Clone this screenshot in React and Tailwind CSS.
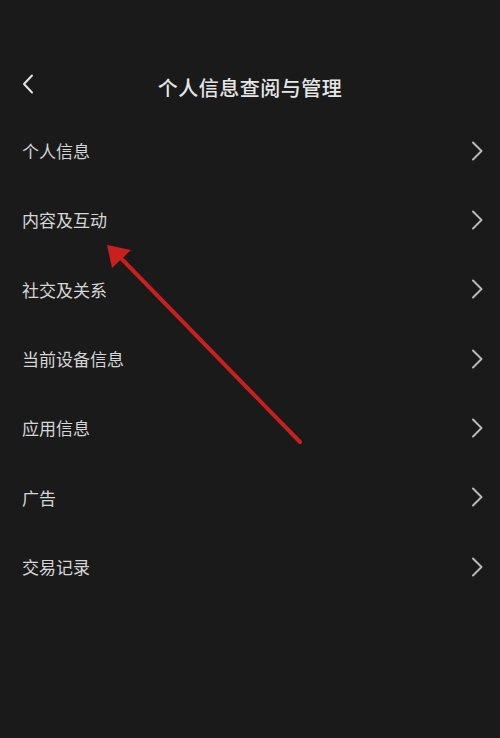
import React from 'react';

const items = ['个人信息', '内容及互动', '社交及关系', '当前设备信息', '应用信息', '广告', '交易记录'];

const font = { fontFamily: '"Noto Sans CJK SC", "Noto Sans", sans-serif' };

function ChevronRight() {
  return (
    <svg width="14" height="22" viewBox="0 0 14 22" fill="none">
      <path d="M3 2.5 L11.5 11 L3 19.5" stroke="#b9b9b9" strokeWidth="2" strokeLinecap="round" strokeLinejoin="round" />
    </svg>
  );
}

export default function App() {
  return (
    <div className="relative w-[500px] h-[738px] bg-[#1a1a1b] overflow-hidden" style={font}>
      <div className="pt-[70px] h-[116px]">
        <div className="relative flex items-center justify-center h-[36px]">
          <button className="absolute left-[18px] top-[2px]">
            <svg width="20" height="24" viewBox="0 0 20 24" fill="none">
              <path d="M14 3.5 L6 12 L14 20.5" stroke="#e4e4e4" strokeWidth="2" strokeLinecap="round" strokeLinejoin="round" />
            </svg>
          </button>
          <h1 className="text-[20px] font-medium text-[#e6e6e6] tracking-[0.5px]">个人信息查阅与管理</h1>
        </div>
      </div>

      <div className="flex flex-col">
        {items.map(label => (
          <div key={label} className="flex items-center justify-between h-[69.33px] pl-[22px] pr-[16px]">
            <span className="text-[17px] text-[#d6d6d6]">{label}</span>
            <ChevronRight />
          </div>
        ))}
      </div>

      <svg className="absolute inset-0 pointer-events-none" width="500" height="738" viewBox="0 0 500 738">
        <line x1="300" y1="442" x2="116" y2="253" stroke="#c8201c" strokeWidth="4" strokeLinecap="round" />
        <polygon points="107,245 131,250 112,268" fill="#c8201c" />
      </svg>
    </div>
  );
}
